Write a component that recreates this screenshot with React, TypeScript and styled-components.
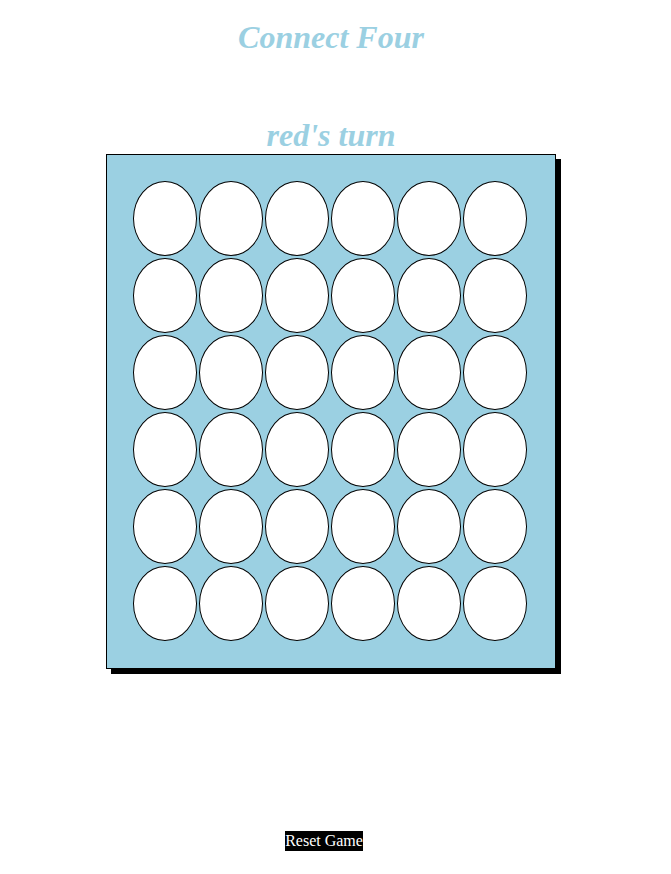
import styled, { createGlobalStyle } from "styled-components";

const GlobalStyle = createGlobalStyle`
  body {
    margin: 0;
    background: #ffffff;
    font-family: "Liberation Serif", "Times New Roman", serif;
  }
`;

const Page = styled.div`
  width: 662px;
  display: flex;
  flex-direction: column;
  align-items: center;
`;

const Heading = styled.h1<{ $top: number }>`
  margin: ${(p) => p.$top}px 0 0;
  font-family: "Liberation Serif", "Times New Roman", serif;
  font-size: 32px;
  line-height: 37px;
  font-style: italic;
  font-weight: bold;
  color: #9bd0e2;
`;

const Board = styled.div`
  width: 398px;
  padding: 25px 25px 26px;
  border: 1px solid #000000;
  background-color: #9bd0e2;
  box-shadow: 5px 5px 0 #000000;
  display: grid;
  grid-template-columns: repeat(6, 66px);
`;

const Cell = styled.div<{ $color?: string }>`
  width: 62px;
  height: 73px;
  margin: 1px;
  border: 1px solid #000000;
  border-radius: 50%;
  background-color: ${(p) => p.$color || "#ffffff"};
`;

const ResetButton = styled.button`
  margin: 162px 14px 0 0;
  padding: 1px 0;
  border: 0;
  background: #000000;
  color: #ffffff;
  font-family: "Liberation Serif", "Times New Roman", serif;
  font-size: 16px;
  line-height: 18px;
  cursor: pointer;
`;

const ROWS = 6;
const COLS = 6;

function App() {
  const cells = Array.from({ length: ROWS * COLS }, (_, i) => i);
  return (
    <>
      <GlobalStyle />
      <Page>
        <Heading $top={19}>Connect Four</Heading>
        <Heading $top={61}>red's turn</Heading>
        <Board>
          {cells.map((i) => (
            <Cell key={i} />
          ))}
        </Board>
        <ResetButton>Reset Game</ResetButton>
      </Page>
    </>
  );
}

export default App;
